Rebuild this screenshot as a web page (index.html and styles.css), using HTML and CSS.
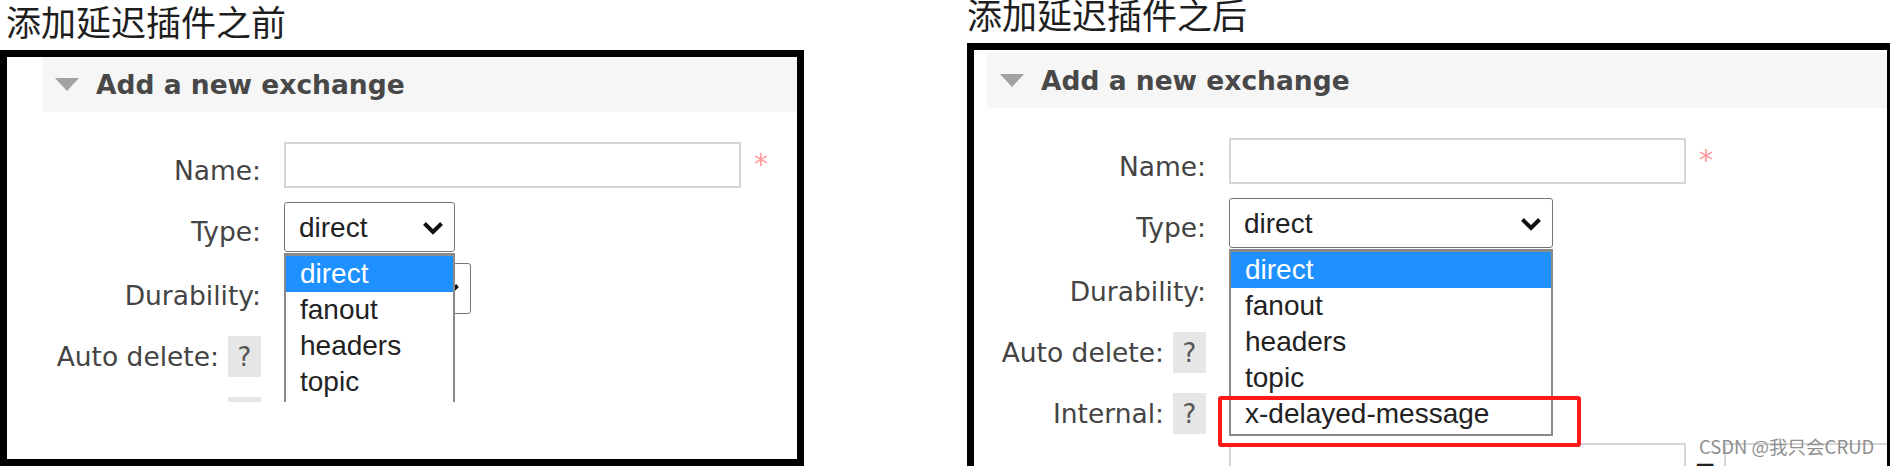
FILE: index.html
```html
<!DOCTYPE html>
<html lang="zh-CN">
<head>
<meta charset="utf-8">
<title>添加延迟插件前后对比</title>
<link rel="stylesheet" href="styles.css">
</head>
<body>
<main class="compare">

  <section class="shot shot-before">
    <h2 class="shot-title">添加延迟插件之前</h2>
    <div class="frame">
      <div class="viewport">
        <div class="panel">
          <div class="panel-head"><span class="tri"></span><h3 class="panel-title">Add a new exchange</h3></div>
          <div class="form">
            <div class="label label--name"><span>Name:</span></div>
            <div class="field"><span class="input input--name"></span><span class="req">*</span></div>

            <div class="label label--type"><span>Type:</span></div>
            <div class="field">
              <div class="select select--type"><span>direct</span><svg class="chev" width="22" height="14" viewBox="0 0 22 14"><path d="M2.5 2.5 L11 11 L19.5 2.5" fill="none" stroke="#111" stroke-width="4"/></svg></div>
              <ul class="dropdown">
                <li class="opt is-selected">direct</li>
                <li class="opt">fanout</li>
                <li class="opt">headers</li>
                <li class="opt">topic</li>
              </ul>
            </div>

            <div class="label label--durability"><span>Durability:</span></div>
            <div class="field">
              <div class="select select--durability"><span></span><svg class="chev" width="22" height="14" viewBox="0 0 22 14"><path d="M2.5 2.5 L11 11 L19.5 2.5" fill="none" stroke="#111" stroke-width="4"/></svg></div>
            </div>

            <div class="label label--help"><span>Auto delete:</span><span class="help">?</span></div>
            <div class="field"></div>

            <div class="label label--help"><span>Internal:</span><span class="help">?</span></div>
            <div class="field"></div>

            <div class="label"></div>
            <div class="field"><span class="input input--name"></span><span class="eq">=</span><span class="input input--value"></span></div>
          </div>
        </div>
      </div>
    </div>
  </section>

  <section class="shot shot-after">
    <h2 class="shot-title">添加延迟插件之后</h2>
    <div class="frame">
      <div class="viewport">
        <div class="panel">
          <div class="panel-head"><span class="tri"></span><h3 class="panel-title">Add a new exchange</h3></div>
          <div class="form">
            <div class="label label--name"><span>Name:</span></div>
            <div class="field"><span class="input input--name"></span><span class="req">*</span></div>

            <div class="label label--type"><span>Type:</span></div>
            <div class="field">
              <div class="select select--type select--wide"><span>direct</span><svg class="chev" width="22" height="14" viewBox="0 0 22 14"><path d="M2.5 2.5 L11 11 L19.5 2.5" fill="none" stroke="#111" stroke-width="4"/></svg></div>
              <ul class="dropdown dropdown--wide">
                <li class="opt is-selected">direct</li>
                <li class="opt">fanout</li>
                <li class="opt">headers</li>
                <li class="opt">topic</li>
                <li class="opt opt--flagged">x-delayed-message<span class="flag"></span></li>
              </ul>
            </div>

            <div class="label label--durability"><span>Durability:</span></div>
            <div class="field">
              <div class="select select--durability"><span></span><svg class="chev" width="22" height="14" viewBox="0 0 22 14"><path d="M2.5 2.5 L11 11 L19.5 2.5" fill="none" stroke="#111" stroke-width="4"/></svg></div>
            </div>

            <div class="label label--help"><span>Auto delete:</span><span class="help">?</span></div>
            <div class="field"></div>

            <div class="label label--help"><span>Internal:</span><span class="help">?</span></div>
            <div class="field"></div>

            <div class="label"></div>
            <div class="field"><span class="input input--name"></span><span class="eq">=</span><span class="input input--value"></span></div>
          </div>
        </div>
      </div>
    </div>
  </section>

  <div class="watermark">CSDN @我只会CRUD</div>
</main>
</body>
</html>
```

FILE: styles.css
```css
html, body {
  margin: 0;
  padding: 0;
  background: #fff;
}

.compare {
  position: relative;
  display: flex;
  align-items: flex-start;
  gap: 163px;
  height: 466px;
  overflow: hidden;
  font-family: "DejaVu Sans", sans-serif;
  color: #444;
}

.shot {
  flex: none;
  padding-top: 3px;
}

.shot-before {
  width: 804px;
}

.shot-after {
  width: 923px;
  margin-top: -7px;
}

.shot-title {
  margin: 0 0 12px;
  font: normal 35px/35px "Noto Sans CJK SC", sans-serif;
  color: #1e1e1e;
  white-space: nowrap;
}

.shot-before .shot-title {
  padding-left: 6px;
}

.frame {
  box-sizing: border-box;
  border: 7px solid #000;
  background: #fff;
}

.shot-before .frame {
  height: 416px;
}

.shot-after .frame {
  height: 440px;
  border-right-width: 3px;
  border-bottom: none;
}

.viewport {
  overflow: hidden;
}

.shot-before .viewport {
  height: 345px;
  padding-left: 35px;
}

.shot-after .viewport {
  height: 430px;
  padding: 3px 0 0 13px;
}

.panel-head {
  display: flex;
  align-items: center;
  height: 55px;
  padding-left: 13px;
  background: #f6f6f6;
}

.tri {
  width: 0;
  height: 0;
  border-left: 12.5px solid transparent;
  border-right: 12.5px solid transparent;
  border-top: 13px solid #a2a2a2;
}

.panel-title {
  margin: 0 0 0 17px;
  font: bold 26.5px/32px "DejaVu Sans", sans-serif;
  color: #484848;
  white-space: nowrap;
}

.form {
  display: grid;
  grid-template-columns: 219px auto;
  grid-template-rows: 60px 61px 73px 61px 50px 50px;
  column-gap: 23px;
  margin-top: 30px;
}

.label {
  display: flex;
  justify-content: flex-end;
  align-items: flex-start;
  font-size: 26.5px;
  line-height: 32px;
  color: #444;
  white-space: nowrap;
}

.label--name { padding-top: 13px; }
.label--type { padding-top: 14px; }
.label--durability { padding-top: 17px; }
.label--help > span:first-child { padding-top: 5px; }

.help {
  display: flex;
  align-items: center;
  justify-content: center;
  width: 33px;
  height: 41px;
  margin-left: 9px;
  background: #e6e6e6;
  color: #555;
  font-size: 26px;
}

.field {
  position: relative;
  display: flex;
  align-items: flex-start;
}

.input {
  box-sizing: border-box;
  height: 46px;
  border: 2px solid #d6d6d6;
  background: #fff;
  flex: none;
}

.input--name { width: 457px; }
.input--value { width: 300px; margin-left: 8px; }

.req {
  margin: 9px 0 0 13px;
  font-size: 28px;
  line-height: 28px;
  color: #ff9a9a;
}

.eq {
  margin-left: 8px;
  padding-top: 8px;
  font-size: 26.5px;
  line-height: 32px;
  color: #222;
}

.select {
  box-sizing: border-box;
  display: flex;
  align-items: center;
  justify-content: space-between;
  height: 50px;
  padding: 2px 10px 0 14px;
  border: 1.5px solid #767676;
  border-radius: 3px;
  background: #fff;
  font: 28px/32px "Liberation Sans", Arial, sans-serif;
  color: #222;
  flex: none;
}

.select--type { width: 171px; }
.select--wide { width: 324px; }
.select--durability { width: 187px; height: 51px; }

.chev {
  flex: none;
}

.dropdown {
  position: absolute;
  top: 51px;
  left: 0;
  z-index: 2;
  box-sizing: border-box;
  width: 171px;
  margin: 0;
  padding: 0 0 2px;
  list-style: none;
  border: 2px solid #8a8a8a;
  border-top-width: 3px;
  background: #fff;
  font: 28px/36px "Liberation Sans", Arial, sans-serif;
  color: #222;
}

.dropdown--wide { width: 324px; }

.opt {
  height: 36px;
  padding-left: 14px;
  white-space: nowrap;
}

.opt.is-selected {
  background: #1e90ff;
  color: #fff;
}

.opt--flagged {
  position: relative;
}

.flag {
  position: absolute;
  left: -13px;
  top: 0;
  box-sizing: border-box;
  width: 363px;
  height: 51px;
  border: 4px solid #ff1a1a;
  border-radius: 3px;
}

.watermark {
  position: absolute;
  left: 1699px;
  top: 435px;
  z-index: 3;
  font: 18.5px/22px "Noto Sans CJK SC", sans-serif;
  color: #8f8f8f;
  white-space: nowrap;
}
```
